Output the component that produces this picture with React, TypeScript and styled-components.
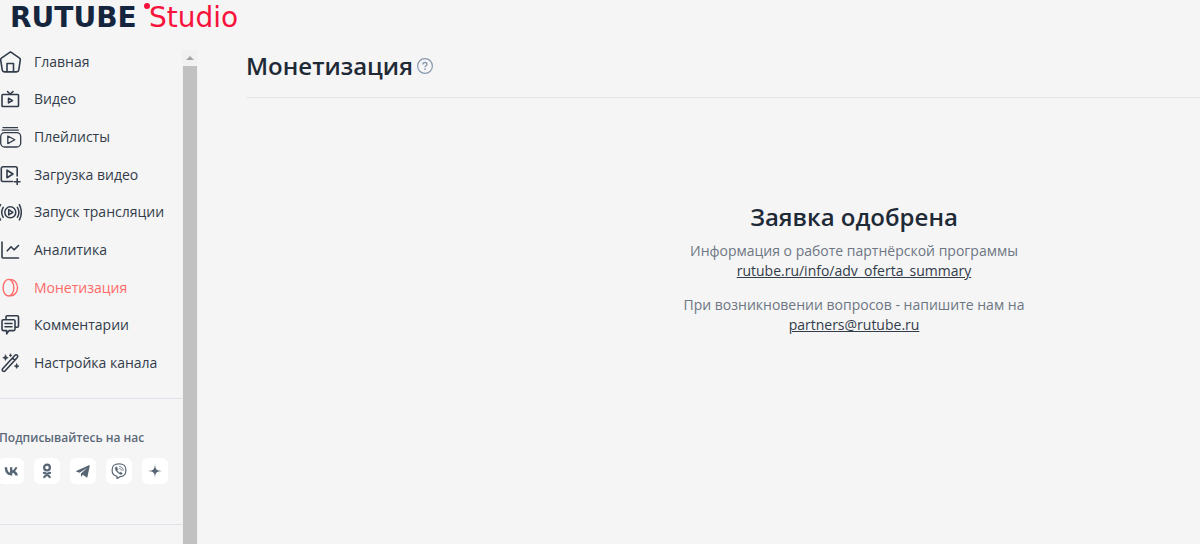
import React from "react";
import styled, { createGlobalStyle } from "styled-components";

const GlobalStyle = createGlobalStyle`
  * { box-sizing: border-box; }
  html, body { margin: 0; background: #f5f5f5; }
  body {
    font-family: "Open Sans", "Noto Sans", sans-serif;
    color: #323c4a;
    overflow: hidden;
  }
`;

const Page = styled.div`
  display: flex;
  flex-direction: column;
  height: 100vh;
  background: #f5f5f5;
`;

const Header = styled.header`
  flex: none;
  height: 43px;
  padding-left: 10px;
`;

const LogoLink = styled.a`
  display: block;
  width: 240px;
`;

const Body = styled.div`
  flex: 1;
  display: flex;
  min-height: 0;
`;

const Sidebar = styled.aside`
  flex: none;
  width: 182px;
  overflow: hidden;
`;

const Menu = styled.nav`
  display: grid;
  grid-auto-rows: 1fr;
  height: 339px;
`;

const MenuLink = styled.a<{ $active?: boolean }>`
  display: flex;
  align-items: center;
  gap: 12px;
  color: ${(p) => (p.$active ? "#ff6a69" : "#323c4a")};
  font-size: 14px;
  line-height: 20px;
  text-decoration: none;
  white-space: nowrap;
`;

const MenuIcon = styled.svg`
  flex: none;
  width: 22px;
  height: 24px;
  fill: none;
  stroke: currentColor;
  stroke-width: 1.6;
  stroke-linecap: round;
  stroke-linejoin: round;
`;

const Follow = styled.section`
  margin-top: 16px;
  padding: 29px 0 40px;
  border-top: 1px solid #e2e3ea;
  border-bottom: 1px solid #e2e3ea;
`;

const FollowTitle = styled.h2`
  margin: 0 0 10px -1px;
  font-size: 12px;
  line-height: 20px;
  font-weight: 600;
  color: #5b6878;
  white-space: nowrap;
`;

const SocialList = styled.div`
  display: flex;
  gap: 10px;
  margin-left: -2px;
`;

const SocialLink = styled.a`
  display: flex;
  align-items: center;
  justify-content: center;
  width: 26px;
  height: 26px;
  border-radius: 6px;
  background: #fff;
  color: #566474;
`;

const Scrollbar = styled.div`
  flex: none;
  display: flex;
  flex-direction: column;
  width: 16px;
  margin-top: 7px;
  background: #f1f1f1;
`;

const ScrollUp = styled.button`
  display: flex;
  align-items: center;
  justify-content: center;
  height: 16px;
  padding: 0;
  border: 0;
  background: #f1f1f1;
`;

const ScrollThumb = styled.div`
  flex: 1;
  margin: 0 1px;
  background: #c1c1c1;
`;

const Main = styled.main`
  flex: 1;
  min-width: 0;
  padding: 7px 0 0 48px;
`;

const TitleRow = styled.div`
  display: flex;
  align-items: center;
  gap: 4px;
  height: 48px;
  padding-bottom: 16px;
  border-bottom: 1px solid #e6e6e6;
`;

const Title = styled.h1`
  margin: 0;
  font-size: 24px;
  line-height: 32px;
  font-weight: 600;
  color: #1f2a37;
`;

const HelpButton = styled.button`
  display: flex;
  padding: 0;
  border: 0;
  background: none;
  color: #8799b0;
`;

const Notice = styled.section`
  padding: 103px 0 0 262px;
  text-align: center;
`;

const NoticeTitle = styled.h2`
  margin: 0 0 8px;
  font-size: 24px;
  line-height: 32px;
  font-weight: 600;
  color: #1f2a37;
`;

const NoticeText = styled.p`
  margin: 0 0 14px;
  font-size: 14px;
  line-height: 20px;
  color: #6d7683;
`;

const NoticeLink = styled.a`
  color: #323c4a;
  text-decoration: underline;
`;

const menu = [
  {
    label: "Главная",
    icon: (
      <>
        <path d="M10.5 1.8 1.400 8.200c-.6.4-.8 1-.7 1.700l1.500 10c.2 1.200 1 2 2.200 2h12.200c1.200 0 2-.8 2.200-2l1.500-10c.1-.7-.1-1.300-.7-1.700z" />
        <path d="M7 21.500v-8h6.500v8" />
      </>
    ),
  },
  {
    label: "Видео",
    icon: (
      <>
        <rect x="2" y="7.500" width="16.500" height="12" rx=".8" />
        <path d="m7.500 4.500 2.700 2.700L13 4.500M8.500 11.300v4.600l4-2.300z" />
      </>
    ),
  },
  {
    label: "Плейлисты",
    icon: (
      <g strokeWidth="1.300">
        <path d="M3 2.600h14.500M2.200 5.200h16.200" />
        <rect x=".7" y="7.600" width="20" height="14.400" rx="4" />
        <path d="M7.800 11v7.600l7-3.800z" />
      </g>
    ),
  },
  {
    label: "Загрузка видео",
    icon: (
      <>
        <path d="M12.500 18.500H3c-1 0-1.700-.7-1.700-1.700V5.500c0-1 .7-1.700 1.700-1.700h12.500c1 0 1.700.7 1.700 1.700V13" />
        <path d="M7 7.200v7.600l6-3.800zM17.200 15.800v5.700M14.300 18.700H20" />
      </>
    ),
  },
  {
    label: "Запуск трансляции",
    icon: (
      <g strokeWidth="1.500">
        <circle cx="10.300" cy="12.300" r="5.500" />
        <path d="M8.700 9.700v5.200l4.200-2.600zM3.200 7.300c-1.800 3-1.800 7 0 10M.5 4.700c-2.500 4.500-2.500 10.700 0 15.200M17.400 7.300c1.800 3 1.800 7 0 10M19.400 4.700c2.300 4.500 2.300 10.700 0 15.200" />
      </g>
    ),
  },
  {
    label: "Аналитика",
    icon: <path d="M2 4v15c0 .7.400 1 1 1h15.500M7.300 12.800l3.700-4 3 3 4.500-4.300" />,
  },
  {
    label: "Монетизация",
    active: true,
    icon: (
      <g strokeWidth="1.400">
        <ellipse cx="8.500" cy="11.700" rx="5.400" ry="8.300" />
        <path d="M10.500 3.500c3.900-.1 7 3.700 7 8.200s-3.100 8.300-7 8.200" />
      </g>
    ),
  },
  {
    label: "Комментарии",
    icon: (
      <>
        <path d="M6 6.300V4c0-.8.500-1.300 1.300-1.300h9.900c.8 0 1.300.5 1.300 1.300v9c0 .8-.5 1.300-1.300 1.300h-1.700" />
        <path d="M3.300 6.800h10.400c.8 0 1.300.5 1.300 1.300v8.200c0 .8-.5 1.300-1.300 1.300H9l-2.300 3.200v-3.200H3.300c-.8 0-1.300-.5-1.300-1.300V8.100c0-.8.500-1.300 1.300-1.300zM5 10.500h7M5 13.800h7" />
      </>
    ),
  },
  {
    label: "Настройка канала",
    icon: (
      <>
        <path d="M2.600 17.800 15 4.300c.7-.7 1.700-.7 2.300 0 .6.600.6 1.500 0 2.200L5 20c-.6.700-1.600.7-2.300 0-.6-.6-.6-1.500-.1-2.200zM12.500 7l2.300 2.200" />
        <path
          fill="currentColor"
          strokeWidth=".7"
          d="m5.500 4 .8 1.900 1.900.8-1.900.8-.8 1.900-.8-1.900-1.900-.8 1.900-.8zM10.500 3l.4 1 1 .4-1 .4-.4 1-.4-1-1-.4 1-.4zM16.700 12.800l.7 1.600 1.600.7-1.600.7-.7 1.600-.7-1.600-1.600-.7 1.600-.7z"
        />
      </>
    ),
  },
];

const socials = [
  {
    name: "ВКонтакте",
    icon: (
      <path
        fill="currentColor"
        d="M8.800 12.500C4.300 12.500 1.800 9.500 1.700 4.300h2.400c.1 3.700 1.600 5.200 2.900 5.500V4.300h2.300v3.100c1.200-.2 2.400-1.500 2.800-3.100h2.300c-.3 1.800-1.600 3.200-2.600 3.800 1 .5 2.500 1.600 3.100 4.400h-2.500c-.4-1.400-1.500-2.500-3.100-2.700v2.700z"
      />
    ),
  },
  {
    name: "Одноклассники",
    icon: (
      <g fill="none" stroke="currentColor" strokeWidth="2.200" strokeLinecap="round">
        <circle cx="8" cy="4.600" r="2.900" />
        <path d="M4.900 9.800c1.900 1.200 4.300 1.200 6.200 0M8 11.200l-2.700 2.900M8 11.200l2.700 2.900" />
      </g>
    ),
  },
  {
    name: "Telegram",
    icon: (
      <path
        fill="currentColor"
        d="M14.800 2.600 12.500 13.800c-.2.700-.6.900-1.200.5L8 11.800l-1.600 1.700c-.3.300-.5.200-.5-.2l.1-2.800 6.300-5.700-7.700 4.900-3-1c-.7-.2-.7-.7.100-1l12.200-5.500c.6-.2 1 .1.900.4z"
      />
    ),
  },
  {
    name: "Viber",
    icon: (
      <g fill="none" stroke="currentColor" strokeWidth="1.200" strokeLinecap="round" strokeLinejoin="round">
        <path d="M8 .9c5 0 6.900 1.600 6.900 6.400s-1.900 6.300-6 6.400L6 15.600v-2.300C2.400 12.700 1.100 11 1.100 7.300 1.100 2.500 3 .9 8 .9z" />
        <path fill="currentColor" strokeWidth=".4" d="M5.400 3.800 4.200 4.600c-.4 2.600 3 6.600 6.200 7l1-1.300-2-1.400-.9.900c-1-.4-2-1.500-2.300-2.600l.7-1z" />
        <path strokeWidth=".8" d="M8.500 3.500c2.400.2 3.700 1.600 3.700 4M8.700 5.500c1 .1 1.600.7 1.700 1.800" />
      </g>
    ),
  },
  {
    name: "Дзен",
    icon: (
      <path fill="currentColor" d="M8 .8c.3 5.400 1 6.800 7.200 7.200C9 8.400 8.300 9.800 8 15.200 7.700 9.800 7 8.400.8 8 7 7.600 7.700 6.200 8 .8z" />
    ),
  },
];

export default function App() {
  return (
    <Page>
      <GlobalStyle />
      <Header>
        <LogoLink href="#" aria-label="RUTUBE Studio">
          <svg width="240" height="36" viewBox="0 0 240 36" fontFamily="DejaVu Sans, sans-serif" display="block">
            <text x="0" y="27" fontSize="28" fontWeight="700" fill="#14253d">RUTUBE</text>
            <circle cx="137" cy="6" r="3" fill="#f8123c" />
            <text x="139" y="27" fontSize="28" fill="#f8123c">Studio</text>
          </svg>
        </LogoLink>
      </Header>
      <Body>
        <Sidebar>
          <Menu>
            {menu.map((item) => (
              <MenuLink key={item.label} href="#" $active={item.active}>
                <MenuIcon viewBox="0 0 22 24" aria-hidden="true">{item.icon}</MenuIcon>
                {item.label}
              </MenuLink>
            ))}
          </Menu>
          <Follow>
            <FollowTitle>Подписывайтесь на нас</FollowTitle>
            <SocialList>
              {socials.map((social) => (
                <SocialLink key={social.name} href="#" aria-label={social.name}>
                  <svg width="16" height="16" viewBox="0 0 16 16" aria-hidden="true">{social.icon}</svg>
                </SocialLink>
              ))}
            </SocialList>
          </Follow>
        </Sidebar>
        <Scrollbar>
          <ScrollUp aria-label="Прокрутить вверх">
            <svg width="8" height="4" viewBox="0 0 8 4" aria-hidden="true">
              <path d="M0 4 4 0l4 4z" fill="#a3a3a3" />
            </svg>
          </ScrollUp>
          <ScrollThumb />
        </Scrollbar>
        <Main>
          <TitleRow>
            <Title>Монетизация</Title>
            <HelpButton aria-label="Справка">
              <svg width="16" height="16" viewBox="0 0 16 16" fill="none" stroke="currentColor" aria-hidden="true">
                <circle cx="8" cy="8" r="7.400" strokeWidth="1.200" />
                <path d="M6 6.500C6 5.200 6.800 4.500 8 4.500s2 .7 2 1.800c0 1.400-2 1.500-2 3M8 10.600v1.400" strokeWidth="1.400" />
              </svg>
            </HelpButton>
          </TitleRow>
          <Notice>
            <NoticeTitle>Заявка одобрена</NoticeTitle>
            <NoticeText>
              Информация о работе партнёрской программы
              <br />
              <NoticeLink href="#">rutube.ru/info/adv_oferta_summary</NoticeLink>
            </NoticeText>
            <NoticeText>
              При возникновении вопросов - напишите нам на
              <br />
              <NoticeLink href="mailto:partners@rutube.ru">partners@rutube.ru</NoticeLink>
            </NoticeText>
          </Notice>
        </Main>
      </Body>
    </Page>
  );
}
